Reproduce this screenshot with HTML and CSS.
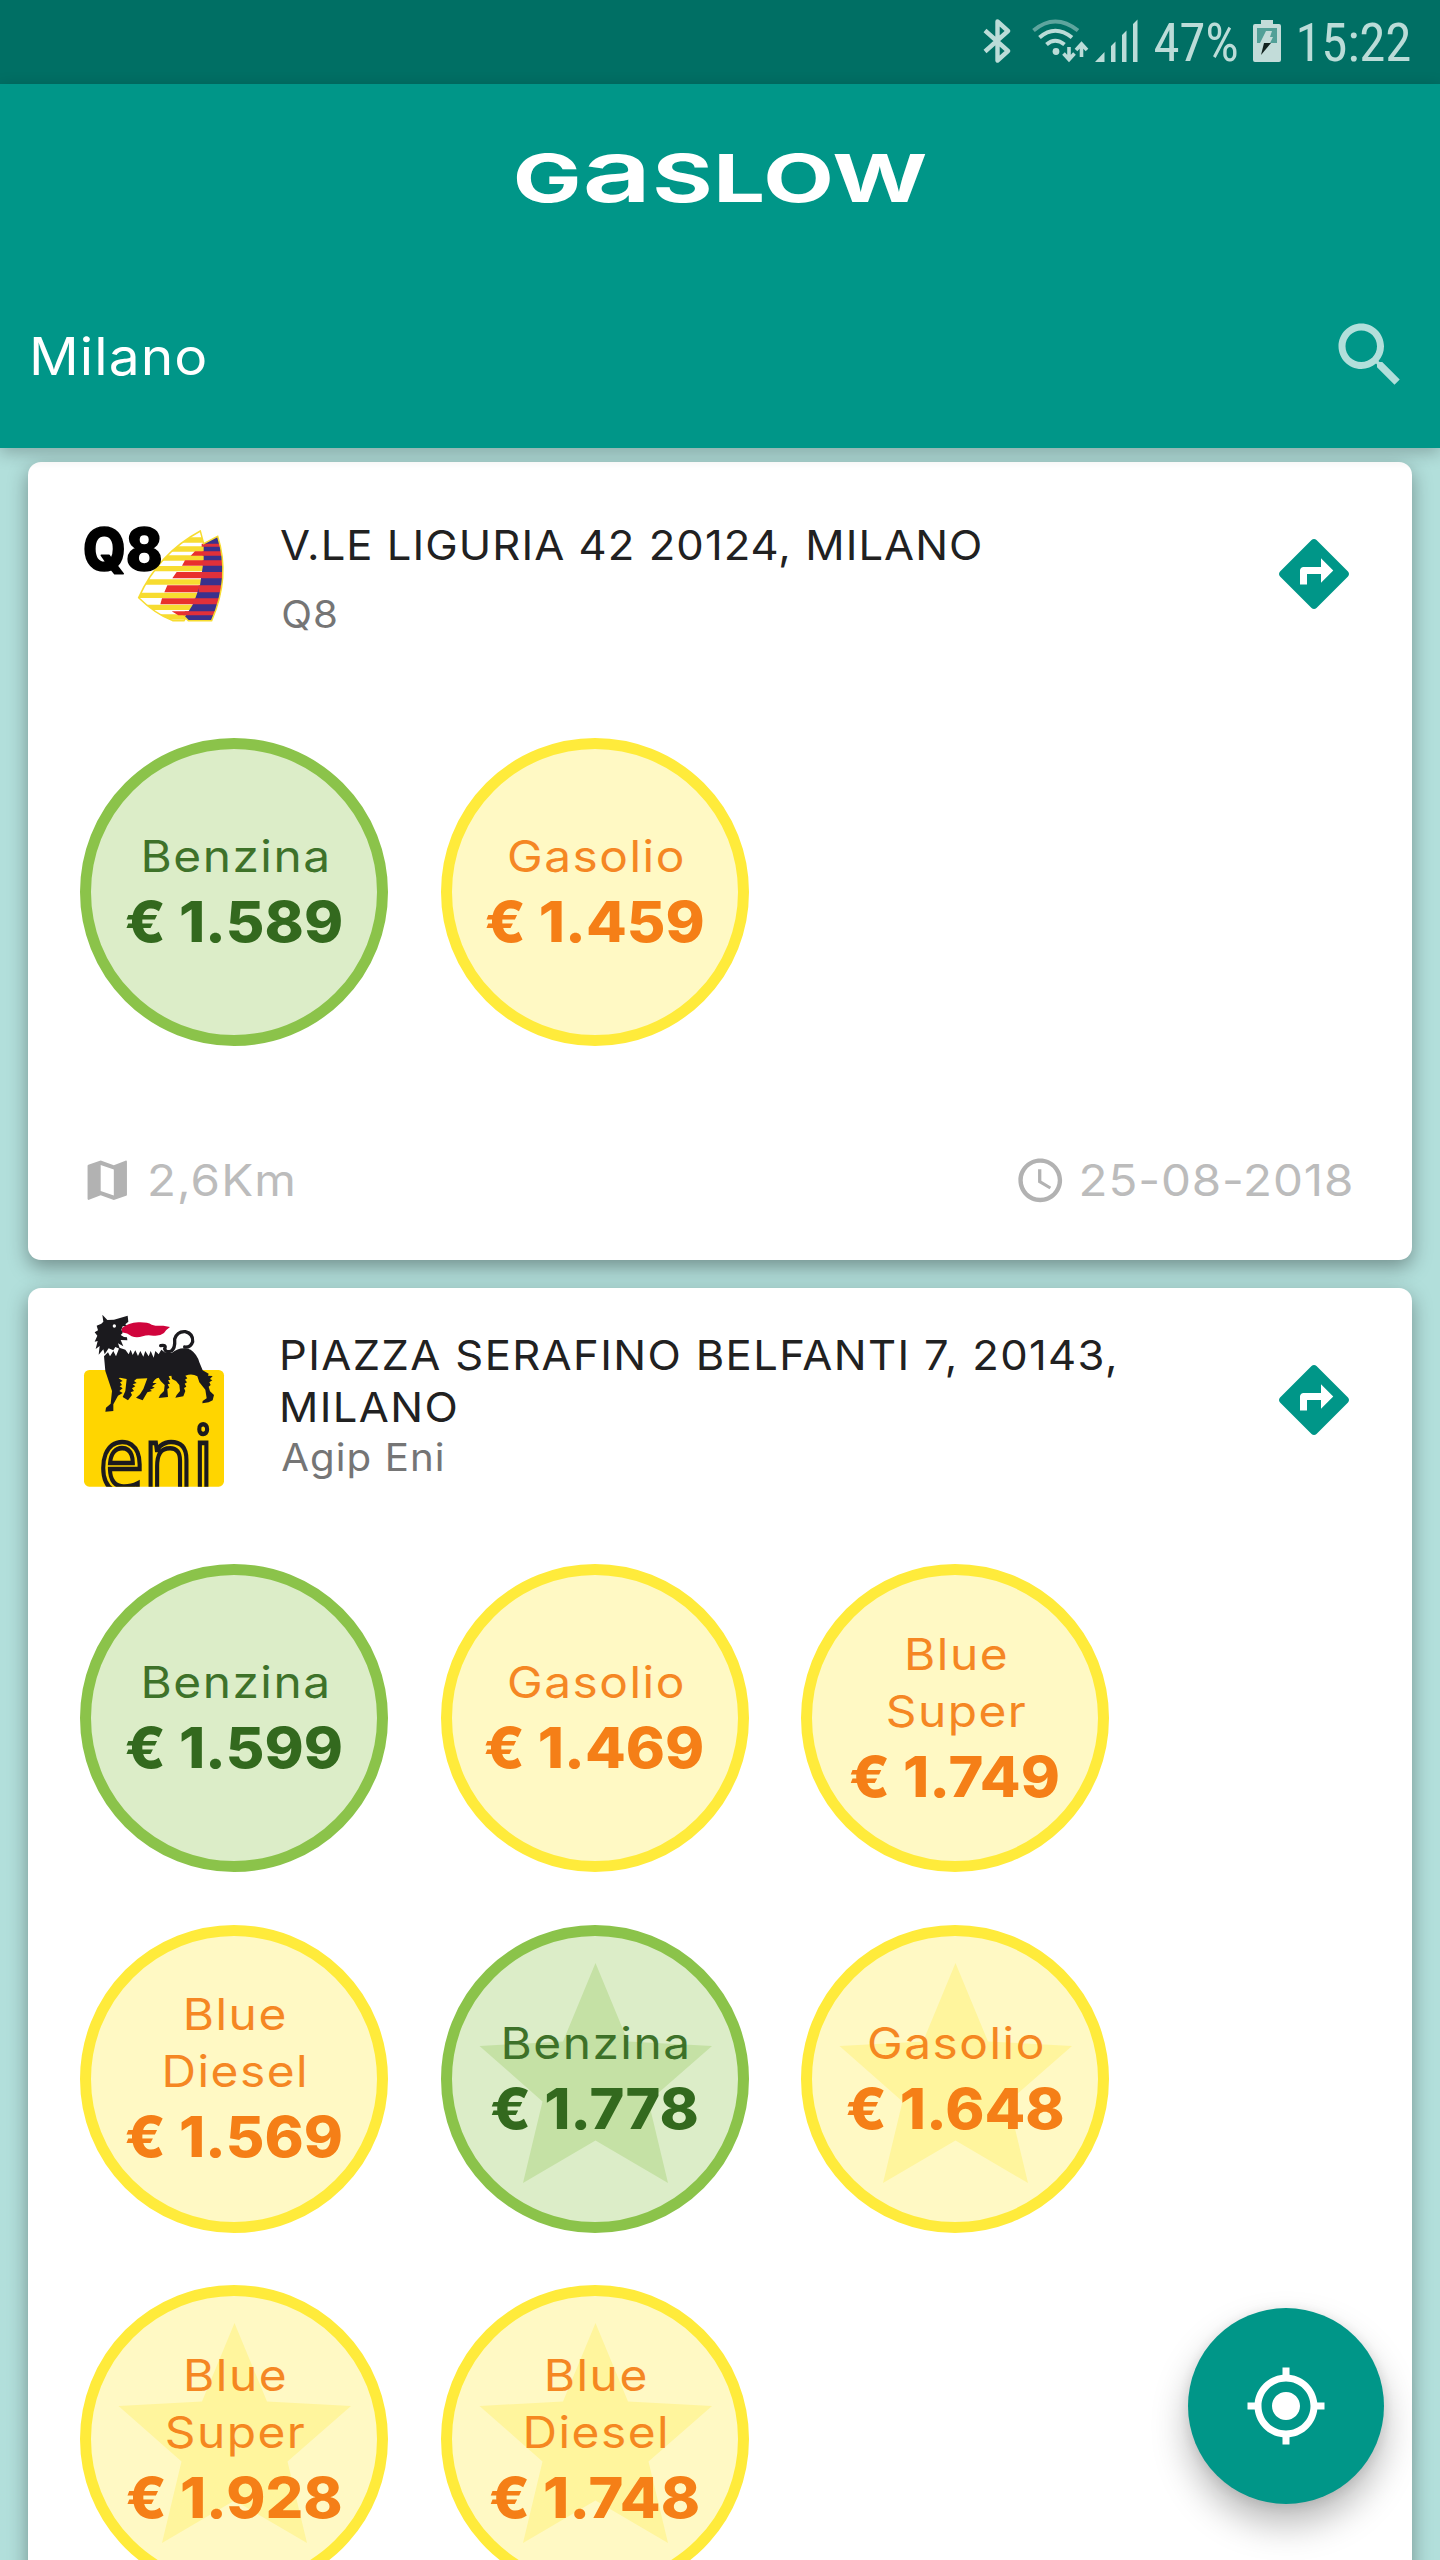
FILE: index.html
```html
<!DOCTYPE html>
<html lang="it">
<head>
<meta charset="utf-8">
<title>GasLow</title>
<link rel="stylesheet" href="styles.css">
</head>
<body>
<svg width="0" height="0" class="defs" aria-hidden="true">
  <symbol id="directions" viewBox="0 0 24 24"><path d="M21.71 11.29l-9-9c-.39-.39-1.02-.39-1.41 0l-9 9c-.39.39-.39 1.02 0 1.41l9 9c.39.39 1.02.39 1.41 0l9-9c.39-.38.39-1.01 0-1.41zM14 14.5V12h-4v3H8v-4c0-.55.45-1 1-1h5V7.5l3.5 3.5-3.5 3.5z"/></symbol>
  <symbol id="star" viewBox="0 0 308 308"><path d="M154.500 38L187 116.500L271 121L207.500 176.500L227 258L154.500 215.500L82 258L101.500 176.500L38.500 121L122 116.500Z"/></symbol>
</svg>

<div class="status">
  <svg class="st-bt" width="28" height="44" viewBox="0 0 28 44"><path d="M2 11.500L25 32L14.500 41.500V2.500L25 12L2 32.500" fill="none" stroke="currentColor" stroke-width="4.400" stroke-linejoin="round"/></svg>
  <svg class="st-wifi" width="57" height="44" viewBox="0 0 57 44"><g fill="none" stroke="currentColor" stroke-width="4"><path d="M1.500 11.500Q23 -6.500 46 11.500" opacity=".5"/><path d="M7.500 18.500Q23 5 40 18.500M14.500 25.500Q23 18 32.500 25.500"/><path d="M37 28V40M31.500 34.500L37 40.500L42.500 34.500M49.500 38V25.500M44 31L49.500 25L55 31" stroke-width="3.600"/></g><circle cx="24" cy="32.500" r="3.400" fill="currentColor"/></svg>
  <svg class="st-sig" width="43" height="44" viewBox="0 0 43 44"><path d="M0 43L9.500 33V43ZM16 43V27L20.500 22.500V43ZM27 43V16L31.500 11.500V43ZM38 43V5L42.500 0.500V43Z" fill="currentColor"/></svg>
  <span class="st-text">47%</span>
  <svg class="st-bat" width="28" height="42" viewBox="0 0 28 42"><path d="M8 0H20V4H26Q28 4 28 6V40Q28 42 26 42H2Q0 42 0 40V6Q0 4 2 4H8Z" fill="#c2dcd9"/><path d="M4 8H24V23H4Z" fill="#52a098"/><path d="M13 11H19L17 17H20L17 23H7Z" fill="#c2dcd9"/><path d="M11 23H18L8 35Z" fill="#12221f"/></svg>
  <span class="st-text">15:22</span>
</div>

<header class="top">
  <h1 class="brand"><span class="brand-in">G<span class="brand-a">a</span>SLOW</span></h1>
  <div class="search">
    <span class="city">Milano</span>
    <svg class="search-ic" viewBox="0 0 24 24"><path d="M15.500 14h-.79l-.28-.27C15.410 12.590 16 11.110 16 9.500 16 5.910 13.090 3 9.500 3S3 5.910 3 9.500 5.910 16 9.500 16c1.610 0 3.090-.59 4.230-1.570l.27.28v.79l5 4.990L20.490 19l-4.990-5zm-6 0C7.010 14 5 11.990 5 9.500S7.010 5 9.500 5 14 7.010 14 9.500 11.990 14 9.500 14z"/></svg>
  </div>
</header>

<main class="list">
  <article class="card">
    <div class="head">
      <svg class="logo" width="140" height="95" viewBox="252 740 420 285">
        <defs>
          <clipPath id="sail"><path d="M416 952Q475 820 601 752L611 790L653 768Q692 890 635 1021H565L557 1013L552 1021H518Q465 1000 416 952Z"/></clipPath>
        </defs>
        <g clip-path="url(#sail)">
          <rect x="410" y="745" width="265" height="280" fill="#fff"/>
          <path d="M410 779H680M410 806H680M410 833H680M410 865H680M410 905H680M410 945H680M410 981H680M410 1010H680" stroke="#f7dc30" stroke-width="16" fill="none"/>
          <path d="M585 813H680V826H572ZM555 840H680V856H546ZM530 875H680V894H517ZM502 915H680V936H493ZM486 954H680V972H481ZM515 993H680V1005H535Z" fill="#e9302c"/>
          <path d="M611 790L653 765Q696 890 635 1025H565L555 1010L580 970L600 915L611 840Z" fill="#39318c"/>
          <path d="M605 790H680V799H605ZM608 813H680V826H608ZM608 840H680V856H608ZM603 875H680V894H603ZM596 915H680V936H596ZM585 954H680V972H575ZM555 993H680V1005H550Z" fill="#e0303a"/>
        </g>
        <path d="M416 952Q475 820 601 752L611 790L653 768Q692 890 635 1021H565L557 1013L552 1021H518Q465 1000 416 952Z" fill="none" stroke="#f7dc30" stroke-width="4.500"/>
        <text class="q8" x="249" y="868" textLength="238" lengthAdjust="spacingAndGlyphs">Q8</text>
      </svg>
      <div class="names">
        <h2 class="addr addr-1">V.LE LIGURIA 42 20124, MILANO</h2>
        <p class="firm firm-low">Q8</p>
      </div>
      <svg class="go"><use href="#directions"/></svg>
    </div>
    <div class="prices">
      <div class="fuel green"><span class="kind">Benzina</span><b class="cost">€ 1.589</b></div>
      <div class="fuel yellow"><span class="kind">Gasolio</span><b class="cost">€ 1.459</b></div>
    </div>
    <div class="foot">
      <span class="meta km"><svg class="meta-ic" viewBox="0 0 24 24"><path d="M20.500 3l-.16.03L15 5.100 9 3 3.360 4.900c-.21.070-.36.250-.36.480V20.500c0 .28.220.5.500.5l.16-.03L9 18.900l6 2.100 5.640-1.900c.21-.07.360-.25.360-.48V3.500c0-.28-.22-.5-.5-.5zM15 19l-6-2.110V5l6 2.110V19z"/></svg><span class="meta-t">2,6Km</span></span>
      <span class="meta"><svg class="meta-ic" viewBox="0 0 24 24"><path d="M11.990 2C6.470 2 2 6.480 2 12s4.470 10 9.990 10C17.520 22 22 17.520 22 12S17.520 2 11.990 2zM12 20c-4.420 0-8-3.580-8-8s3.580-8 8-8 8 3.580 8 8-3.580 8-8 8zm.5-13H11v6l5.250 3.150.75-1.230-4.500-2.670z"/></svg><span class="meta-t meta-r">25-08-2018</span></span>
    </div>
  </article>

  <article class="card">
    <div class="head">
      <svg class="logo" width="140" height="173" viewBox="72 69 420 519">
        <defs><clipPath id="plate"><rect x="72" y="237" width="420" height="350" rx="16"/></clipPath></defs>
        <rect x="72" y="237" width="420" height="350" rx="16" fill="#ffd500"/>
        <g clip-path="url(#plate)"><text class="eni" x="116" y="604" textLength="344" lengthAdjust="spacingAndGlyphs">eni</text></g>
        <path d="M185 112Q205 95 235 94Q262 93 275 101Q290 106 310 104L330 108Q318 116 312 126Q300 136 280 134Q262 130 248 136Q230 142 215 136Q203 126 185 124Z" fill="#d0043c"/>
        <g fill="#1b1a1e">
          <path d="M127 71L142 87L162 86L203 74L205 92L196 100L200 104L188 106L184 116L188 126L182 132L192 138L201 139L202 148L182 147L190 166L174 157L180 174L166 168L160 178L146 172L134 190L130 175L116 191L119 165L107 174L113 150L104 152L112 134L104 124L114 118L110 104L124 98L130 92Z"/>
          <path d="M132 196L144 184L150 196L160 180L168 196L178 170L196 176L206 190L212 176L218 192L226 178L234 195L241 180L250 197L256 180L266 196L272 180L281 200L286 180L296 190L304 176L314 184L335 186Q362 164 392 176Q412 190 418 214L428 238L446 248L444 254L458 255L450 264L457 268L448 274L452 282L446 287L450 301L462 312L458 328L446 334L427 337L428 330L440 322L436 296L418 274L412 256Q396 246 376 254L382 262L375 266L381 274L374 278L379 287L372 291L376 300L370 316L346 320L350 312L360 300L358 282L348 270L336 264L334 254L326 256L331 266L324 268L330 278L323 280L328 290L322 294L324 318L296 321L300 312L312 300L314 282L302 270L296 260Q284 262 278 276L290 276L276 286L284 290L270 296L276 300L262 304L248 328L228 320L240 310L250 294L262 262L230 263L222 270L230 276L218 280L226 286L216 292L222 300L212 304L216 312L204 328L188 318L196 300L200 264L180 260L176 262L188 270L180 274L186 282L179 286L188 292L178 300L188 306L174 314L160 340L160 360L136 362L138 350L152 338L156 300L146 270L136 240Z"/>
          <circle cx="163" cy="105" r="5" fill="#fff"/>
        </g>
        <path d="M302 164Q320 160 314 174Q318 186 334 180Q346 172 344 144Q352 120 376 122Q400 128 398 152Q392 170 374 168" fill="none" stroke="#1b1a1e" stroke-width="10" stroke-linecap="round"/>
      </svg>
      <div class="names">
        <h2 class="addr">PIAZZA SERAFINO BELFANTI 7, 20143,<br>MILANO</h2>
        <p class="firm">Agip Eni</p>
      </div>
      <svg class="go"><use href="#directions"/></svg>
    </div>
    <div class="prices">
      <div class="fuel green"><span class="kind">Benzina</span><b class="cost">€ 1.599</b></div>
      <div class="fuel yellow"><span class="kind">Gasolio</span><b class="cost">€ 1.469</b></div>
      <div class="fuel yellow"><span class="kind">Blue<br>Super</span><b class="cost">€ 1.749</b></div>
      <div class="fuel yellow"><span class="kind">Blue<br>Diesel</span><b class="cost">€ 1.569</b></div>
      <div class="fuel green"><svg class="best"><use href="#star"/></svg><span class="kind">Benzina</span><b class="cost">€ 1.778</b></div>
      <div class="fuel yellow"><svg class="best"><use href="#star"/></svg><span class="kind">Gasolio</span><b class="cost">€ 1.648</b></div>
      <div class="fuel yellow"><svg class="best"><use href="#star"/></svg><span class="kind">Blue<br>Super</span><b class="cost">€ 1.928</b></div>
      <div class="fuel yellow"><svg class="best"><use href="#star"/></svg><span class="kind">Blue<br>Diesel</span><b class="cost">€ 1.748</b></div>
    </div>
  </article>
</main>

<button class="fab" aria-label="Posizione"><svg class="fab-ic" viewBox="0 0 24 24"><path d="M12 8c-2.210 0-4 1.790-4 4s1.790 4 4 4 4-1.790 4-4-1.790-4-4-4zm8.940 3c-.46-4.170-3.770-7.480-7.940-7.940V1h-2v2.060C6.830 3.520 3.520 6.830 3.060 11H1v2h2.060c.46 4.170 3.770 7.480 7.940 7.940V23h2v-2.060c4.170-.46 7.480-3.770 7.940-7.940H23v-2h-2.060zM12 19c-3.870 0-7-3.130-7-7s3.130-7 7-7 7 3.130 7 7-3.130 7-7 7z"/></svg></button>
</body>
</html>
```
FILE: styles.css
```css
* { box-sizing: border-box; }
html, body { height: 2560px; overflow: hidden; }
body {
  margin: 0;
  background: #b2dfdb;
  font-family: Inter, "Liberation Sans", sans-serif;
  display: flex;
  flex-direction: column;
}
h1, h2, p { margin: 0; font-weight: 400; }
.defs { position: absolute; }

.status {
  flex: none;
  height: 84px;
  background: #006f64;
  color: #bbdcd8;
  display: flex;
  align-items: center;
  justify-content: flex-end;
  padding: 0 29px 2px 0;
}
.st-wifi { margin-left: 21px; }
.st-sig { margin: 0 16px 0 6px; }
.st-bat { margin: 0 14px 0 15px; }
.st-text {
  font: 400 53px/62px "Roboto Condensed", Roboto, sans-serif;
  letter-spacing: -.3px;
  padding-top: 4px;
}

.top {
  flex: none;
  height: 364px;
  padding: 54px 28px 50px 29px;
  background: #009688;
  box-shadow: 0 5px 16px rgba(0, 0, 0, .24);
  position: relative;
  z-index: 1;
}
.brand {
  height: 80px;
  line-height: 80px;
  font-size: 66px;
  font-weight: 700;
  color: #fff;
  text-align: center;
}
.brand-in { display: inline-block; transform: scaleX(1.39); letter-spacing: .5px; }
.brand-a { font-size: 87px; font-weight: 600; line-height: 0; }
.search {
  margin-top: 95px;
  height: 84px;
  display: flex;
  align-items: center;
  justify-content: space-between;
}
.city {
  color: #fff;
  font-size: 52px;
  letter-spacing: 1px;
  padding-top: 2px;
  transform: scaleX(1.06);
  transform-origin: left;
}
.search-ic { width: 84px; height: 84px; fill: #b2dfdb; }

.list {
  flex: 1;
  padding: 14px 28px 0;
  display: flex;
  flex-direction: column;
  gap: 28px;
}
.card {
  flex: none;
  background: #fff;
  border-radius: 13px;
  box-shadow: 0 7px 20px rgba(0, 0, 0, .36);
}
.card:last-child { height: 1400px; }
.head {
  height: 224px;
  padding: 0 56px;
  display: flex;
  align-items: center;
}
.logo { flex: none; margin-right: 54px; overflow: visible; }
.q8 { font: 800 172px Inter, sans-serif; stroke: #000; stroke-width: 5; stroke-linejoin: round; }
.eni { font: 400 272px "Open Sans", sans-serif; fill: #ffd500; stroke: #1b1a1e; stroke-width: 14; }
.names { flex: 1; padding-top: 10px; }
.addr, .firm { transform-origin: left; white-space: nowrap; }
.addr {
  font-size: 41.5px;
  line-height: 52px;
  letter-spacing: 1.3px;
  color: #212121;
  padding-left: 1px;
  transform: scaleX(1.05);
}
.addr-1 { letter-spacing: 1px; padding-left: 2px; }
.firm {
  font-size: 38px;
  line-height: 48.6px;
  letter-spacing: 1px;
  color: #757575;
  padding-left: 3px;
  transform: scaleX(1.06);
}
.firm-low { padding-top: 19px; }
.go { flex: none; width: 84px; height: 84px; fill: #009688; }

.prices {
  display: grid;
  grid-template-columns: repeat(3, 308px);
  gap: 52.5px;
  padding: 52px 52px 0;
}
.fuel {
  position: relative;
  height: 308px;
  border: 11px solid;
  border-radius: 50%;
  display: flex;
  flex-direction: column;
  align-items: center;
  justify-content: center;
  padding-top: 3px;
}
.green { background: #dcedc8; border-color: #8bc34a; color: #33691e; fill: #c5e1a5; }
.yellow { background: #fff9c4; border-color: #ffeb3b; color: #f57f17; fill: #fff59d; }
.best { position: absolute; left: -11px; top: -11px; width: 308px; height: 308px; }
.kind {
  position: relative;
  font-size: 43.5px;
  line-height: 57px;
  letter-spacing: 1.35px;
  padding-left: 3px;
  text-align: center;
  opacity: .93;
  transform: scaleX(1.1);
}
.cost {
  position: relative;
  font-size: 56px;
  font-weight: 800;
  line-height: 74px;
  white-space: nowrap;
  transform: scaleX(1.06);
}
.foot {
  display: flex;
  justify-content: space-between;
  padding: 107.5px 57.5px 54px 52.5px;
}
.meta { display: flex; align-items: center; gap: 13px; height: 52.5px; color: #bcbcbc; font-size: 44px; letter-spacing: .8px; }
.meta-t { padding-top: 1px; transform: scaleX(1.08); transform-origin: left; }
.meta-r { margin-left: 20px; transform-origin: right; }
.km { letter-spacing: 1px; gap: 14px; }
.meta-ic { width: 52.5px; height: 52.5px; fill: #b2b2b2; }

.fab {
  position: fixed;
  z-index: 2;
  left: 1188px;
  top: 2308px;
  width: 196px;
  height: 196px;
  padding: 0;
  border: 0;
  border-radius: 50%;
  background: #009688;
  box-shadow: 0 20px 36px rgba(0, 0, 0, .28), 0 2px 14px rgba(0, 0, 0, .1);
  display: grid;
  place-items: center;
}
.fab-ic { width: 84px; height: 84px; fill: #fff; }
```
